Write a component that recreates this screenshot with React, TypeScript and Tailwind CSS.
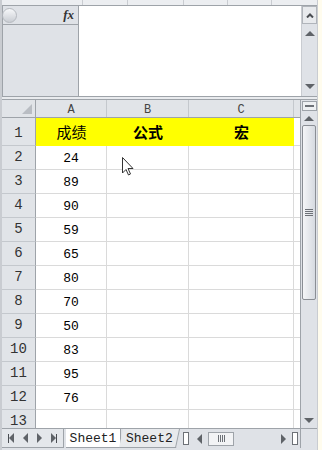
import React from 'react'

const mono = { fontFamily: '"Liberation Mono", "DejaVu Sans Mono", monospace' }
const cjk = { fontFamily: '"Noto Sans CJK SC", "Noto Sans", sans-serif' }

const scores = ['24', '89', '90', '59', '65', '80', '70', '50', '83', '95', '76', '']

function Tri({ dir, className = '' }: { dir: 'up' | 'down' | 'left' | 'right'; className?: string }) {
  const pts = {
    up: '0,5 5,0 10,5',
    down: '0,0 10,0 5,5',
    left: '5,0 5,10 0,5',
    right: '0,0 0,10 5,5',
  }[dir]
  const vb = dir === 'up' || dir === 'down' ? '0 0 10 5' : '0 0 5 10'
  const size = dir === 'up' || dir === 'down' ? 'w-[10px] h-[5px]' : 'w-[5px] h-[10px]'
  return (
    <svg viewBox={vb} className={`${size} shrink-0 ${className}`}>
      <polygon points={pts} fill="#5f6368" />
    </svg>
  )
}

function HeaderRow() {
  return (
    <div className="flex h-[18px] shrink-0 bg-[#e1e4e8] border-b border-[#9ea3a9]" style={mono}>
      <div className="w-[34px] shrink-0 border-r border-[#9ea3a9] relative">
        <svg viewBox="0 0 10 10" className="absolute right-[3px] bottom-[3px] w-[10px] h-[10px]">
          <polygon points="10,0 10,10 0,10" fill="#b9bdc3" />
        </svg>
      </div>
      <div className="w-[71px] shrink-0 border-r border-[#c4c8cd] flex items-center justify-center pt-[2px] text-[12px] text-[#444]">A</div>
      <div className="w-[82px] shrink-0 border-r border-[#c4c8cd] flex items-center justify-center pt-[2px] text-[12px] text-[#444]">B</div>
      <div className="w-[105px] shrink-0 border-r border-[#c4c8cd] flex items-center justify-center pt-[2px] text-[12px] text-[#444]">C</div>
      <div className="flex-1" />
    </div>
  )
}

function RowNum({ n }: { n: number }) {
  return (
    <div
      className="w-[34px] shrink-0 bg-[#e1e4e8] border-r border-[#9ea3a9] border-b border-b-[#c4c8cd] flex items-end justify-center pb-[1px] text-[14px] text-[#333]"
      style={mono}
    >
      {n}
    </div>
  )
}

export default function App() {
  return (
    <div className="w-[322px] h-[450px] flex bg-[#dfe2e7] overflow-hidden relative">
      <div className="w-[317px] flex flex-col border-l-2 border-[#c9ccd1]">
        {/* top strip */}
        <div className="h-[6px] shrink-0 flex bg-[#eceef1] border-b border-[#9ea3a9]">
          <div className="w-[81px] border-r border-[#c9ccd1]" />
          <div className="w-[45px] border-r border-[#c9ccd1]" />
          <div className="w-[56px] border-r border-[#c9ccd1]" />
          <div className="w-[44px] border-r border-[#c9ccd1]" />
          <div className="w-[44px] border-r border-[#c9ccd1]" />
          <div className="flex-1" />
        </div>

        {/* formula bar */}
        <div className="h-[91px] shrink-0 flex border-b border-[#9ea3a9]">
          <div className="w-[77px] shrink-0 bg-[#dfe2e7] border-r border-[#9ea3a9] border-l border-l-[#9ea3a9]">
            <div className="h-[19px] border-b border-[#9ea3a9] flex items-center justify-between pr-[4px] relative">
              <div className="w-[15px] h-[15px] rounded-full border border-[#b5b9bf] bg-gradient-to-b from-[#f7f8fa] to-[#c9cdd3] -ml-[1px]" />
              <span className="text-[13px] italic font-bold text-[#333]" style={{ fontFamily: '"Liberation Serif", serif' }}>fx</span>
            </div>
          </div>
          <div className="flex-1 bg-white" />
          <div className="w-[16px] shrink-0 bg-[#dfe2e7] border-l border-[#c9ccd1] flex flex-col items-center">
            <div className="w-[15px] h-[18px] border border-[#b0b4ba] bg-[#e8eaed] flex items-center justify-center">
              <svg viewBox="0 0 8 5" className="w-[8px] h-[5px]">
                <polyline points="1,4.5 4,1.5 7,4.5" fill="none" stroke="#4a4d52" strokeWidth="2" />
              </svg>
            </div>
            <Tri dir="up" className="mt-[7px]" />
            <div className="flex-1" />
            <Tri dir="down" className="mb-[7px]" />
          </div>
        </div>

        {/* separator */}
        <div className="h-[3px] shrink-0 bg-[#e9ebee] border-b border-[#9ea3a9]" />

        {/* grid + vertical scrollbar */}
        <div className="h-[328px] shrink-0 flex">
          <div className="flex-1 bg-white overflow-hidden flex flex-col">
            <HeaderRow />
            <div className="flex h-[28px] shrink-0">
              <RowNum n={1} />
              <div className="w-[71px] shrink-0 bg-[#ffff00] flex items-center justify-center text-[15px] text-black" style={cjk}>成绩</div>
              <div className="w-[82px] shrink-0 bg-[#ffff00] flex items-center justify-center text-[15px] font-bold text-black" style={cjk}>公式</div>
              <div className="w-[105px] shrink-0 bg-[#ffff00] flex items-center justify-center text-[15px] font-bold text-black" style={cjk}>宏</div>
              <div className="flex-1 border-b border-[#dadada]" />
            </div>
            {scores.map((s, i) => (
              <div key={i} className="flex h-[24px] shrink-0">
                <RowNum n={i + 2} />
                <div className="w-[71px] shrink-0 border-r border-b border-[#dadada] flex items-center justify-center pt-[2px] text-[13px] text-black" style={mono}>{s}</div>
                <div className="w-[82px] shrink-0 border-r border-b border-[#dadada]" />
                <div className="w-[105px] shrink-0 border-r border-b border-[#dadada]" />
                <div className="flex-1 border-b border-[#dadada]" />
              </div>
            ))}
          </div>
          <div className="w-[17px] shrink-0 bg-[#dfe2e7] border-l border-[#9ea3a9] flex flex-col items-center">
            <div className="w-[15px] h-[10px] mt-[1px] border border-[#9ea3a9] bg-[#eef0f2] flex items-center justify-center">
              <div className="w-[9px] h-[2px] bg-[#6d7177]" />
            </div>
            <Tri dir="up" className="mt-[5px]" />
            <div className="w-[14px] h-[175px] mt-[4px] border border-[#8a8e94] rounded-[2px] bg-gradient-to-r from-[#f4f5f7] to-[#d6dae0] flex flex-col items-center justify-center gap-[1px]">
              <div className="w-[8px] h-[1px] bg-[#6d7177]" />
              <div className="w-[8px] h-[1px] bg-[#6d7177]" />
              <div className="w-[8px] h-[1px] bg-[#6d7177]" />
              <div className="w-[8px] h-[1px] bg-[#6d7177]" />
            </div>
            <div className="flex-1" />
            <Tri dir="down" className="mb-[5px]" />
          </div>
        </div>

        {/* sheet tabs */}
        <div className="h-[20px] shrink-0 flex items-stretch bg-[#dfe2e7] border-t border-[#9ea3a9]">
          <div className="w-[62px] shrink-0 border-r border-b border-[#9ea3a9] bg-[#e4e7eb] flex items-center justify-around px-[2px]">
            <div className="flex items-center"><div className="w-[1px] h-[9px] bg-[#4a4d52]" /><Tri dir="left" /></div>
            <Tri dir="left" />
            <Tri dir="right" />
            <div className="flex items-center"><Tri dir="right" /><div className="w-[1px] h-[9px] bg-[#4a4d52]" /></div>
          </div>
          <div className="w-[55px] ml-[2px] shrink-0 bg-white border-b border-r border-[#9ea3a9] flex items-center justify-center pt-[1px] text-[13px] text-[#222]" style={mono}>Sheet1</div>
          <div className="w-[57px] shrink-0 bg-[#e8eaed] border-b border-r border-[#9ea3a9] flex items-center justify-center pt-[1px] text-[13px] text-[#222] skew-x-[-12deg]" style={mono}>
            <span className="skew-x-[12deg]">Sheet2</span>
          </div>
          <div className="w-[6px] ml-[5px] my-[3px] shrink-0 border border-[#6d7177] bg-white" />
          <div className="flex-1 flex items-center pl-[8px] pr-[2px]">
            <Tri dir="left" />
            <div className="w-[26px] h-[14px] ml-[6px] border border-[#9ea3a9] bg-[#f2f3f5] flex items-center justify-center gap-[1px]">
              <div className="w-[1px] h-[7px] bg-[#6d7177]" />
              <div className="w-[1px] h-[7px] bg-[#6d7177]" />
              <div className="w-[1px] h-[7px] bg-[#6d7177]" />
              <div className="w-[1px] h-[7px] bg-[#6d7177]" />
            </div>
            <div className="flex-1" />
            <Tri dir="right" />
            <div className="w-[6px] h-[13px] ml-[6px] border border-[#6d7177] bg-white" />
          </div>
          <div className="w-[17px] shrink-0 border-l border-[#9ea3a9]" />
        </div>
      </div>
      <div className="w-[5px] bg-[#fffcee] border-l border-[#c9ccd1]" />

      {/* mouse cursor */}
      <svg viewBox="0 0 12 19" className="absolute left-[122px] top-[157px] w-[12px] h-[19px]">
        <polygon points="0.5,0.5 0.5,16 4,12.5 6.5,18 8.5,17 6,11.5 11,11.5" fill="white" stroke="#333" strokeWidth="1" />
      </svg>
    </div>
  )
}
